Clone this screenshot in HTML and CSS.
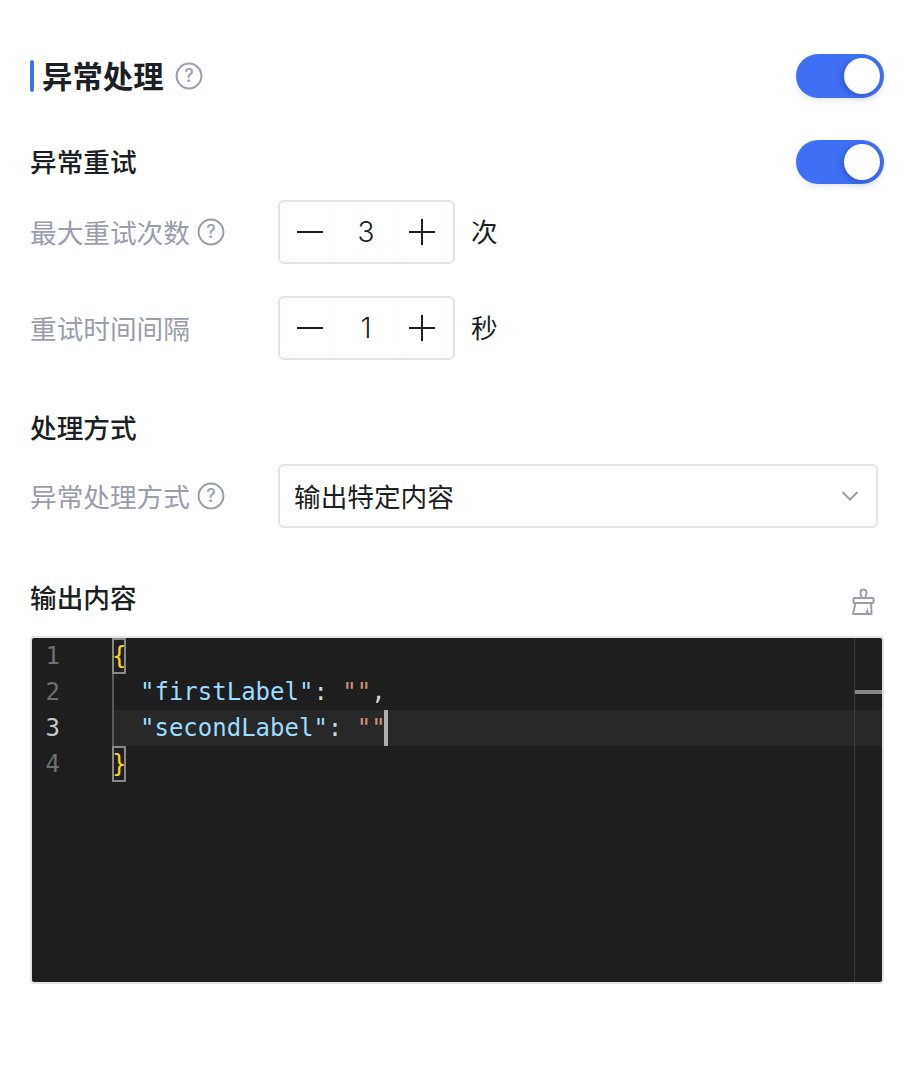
FILE: index.html
```html
<!DOCTYPE html>
<html lang="zh-CN">
<head>
<meta charset="utf-8">
<title>异常处理</title>
<link rel="stylesheet" href="styles.css">
</head>
<body>
<main class="panel">
  <header class="row title-row">
    <div class="title-wrap">
      <span class="title-bar"></span>
      <h1 class="title">异常处理</h1>
      <svg class="help help-title" viewBox="0 0 28 28"><circle cx="14" cy="14" r="12.4" fill="none" stroke="#9a9dab" stroke-width="2"/><text x="14" y="20" text-anchor="middle" class="help-q">?</text></svg>
    </div>
    <div class="toggle"><span class="knob"></span></div>
  </header>

  <div class="row sub-row first-sub">
    <h2 class="sub">异常重试</h2>
    <div class="toggle"><span class="knob"></span></div>
  </div>

  <div class="field">
    <label class="label">最大重试次数<svg class="help" viewBox="0 0 28 28"><circle cx="14" cy="14" r="12.4" fill="none" stroke="#9a9dab" stroke-width="2"/><text x="14" y="20" text-anchor="middle" class="help-q">?</text></svg></label>
    <div class="stepper">
      <span class="step"><svg viewBox="0 0 26 26" class="step-icon"><path d="M0 13H26" stroke="#1c1f23" stroke-width="2"/></svg></span>
      <span class="value">3</span>
      <span class="step"><svg viewBox="0 0 26 26" class="step-icon"><path d="M0 13H26M13 0V26" stroke="#1c1f23" stroke-width="2"/></svg></span>
    </div>
    <span class="unit">次</span>
  </div>

  <div class="field field-next">
    <label class="label">重试时间间隔</label>
    <div class="stepper">
      <span class="step"><svg viewBox="0 0 26 26" class="step-icon"><path d="M0 13H26" stroke="#1c1f23" stroke-width="2"/></svg></span>
      <span class="value">1</span>
      <span class="step"><svg viewBox="0 0 26 26" class="step-icon"><path d="M0 13H26M13 0V26" stroke="#1c1f23" stroke-width="2"/></svg></span>
    </div>
    <span class="unit">秒</span>
  </div>

  <div class="row sub-row second-sub"><h2 class="sub">处理方式</h2></div>

  <div class="field">
    <label class="label">异常处理方式<svg class="help" viewBox="0 0 28 28"><circle cx="14" cy="14" r="12.4" fill="none" stroke="#9a9dab" stroke-width="2"/><text x="14" y="20" text-anchor="middle" class="help-q">?</text></svg></label>
    <div class="select">
      <span class="select-text">输出特定内容</span>
      <svg class="chevron" viewBox="0 0 18 12"><path d="M1.5 2 9 9.500 16.500 2" fill="none" stroke="#9a9dab" stroke-width="2"/></svg>
    </div>
  </div>

  <div class="row sub-row third-sub">
    <h2 class="sub">输出内容</h2>
    <svg class="brush" viewBox="0 0 24 32"><path d="M10.500 15C10.500 12.500 9.500 11.500 9.500 9.500a3 3 0 0 1 6 0C15.500 11.500 14.500 12.500 14.500 15M3.500 15h18a1 1 0 0 1 1 1v3a1 1 0 0 1-1 1h-18a1 1 0 0 1-1-1v-3a1 1 0 0 1 1-1zM4.500 20 2 31h18.500L20 20" fill="none" stroke="#9a9dab" stroke-width="2" stroke-linejoin="round"/><path d="M14.500 31l2-6.500 1.500 6.500z" fill="#9a9dab"/></svg>
  </div>

  <div class="editor">
    <div class="gutter">
      <div class="ln">1</div>
      <div class="ln">2</div>
      <div class="ln ln-active">3</div>
      <div class="ln">4</div>
    </div>
    <div class="code">
      <span class="guide"></span>
      <div class="line"><span class="bracket">{</span></div>
      <div class="line indented"><span class="key">"firstLabel"</span><span class="punct">: </span><span class="str">""</span><span class="punct">,</span></div>
      <div class="line indented line-active"><span class="key">"secondLabel"</span><span class="punct">: </span><span class="str">""</span><span class="cursor"></span></div>
      <div class="line"><span class="bracket">}</span></div>
    </div>
    <div class="ruler"><span class="ruler-mark"></span></div>
  </div>
</main>
</body>
</html>
```
FILE: styles.css
```css
* { box-sizing: border-box; }
html, body { margin: 0; padding: 0; background: #fff; }
body { font-family: "Noto Sans CJK SC", "Inter", sans-serif; color: #1c1f23; }
.panel { width: 914px; height: 1082px; padding: 54px 30px 0; }
.row { display: flex; align-items: center; justify-content: space-between; height: 44px; }
.title-wrap { display: flex; align-items: center; }
.title-bar { width: 4px; height: 32px; border-radius: 2px; background: #4070f6; margin-right: 8px; }
.title { margin: 0; font-size: 30.4px; line-height: 42px; padding-bottom: 2px; font-weight: 700; color: #1c1f23; }
.help { width: 28px; height: 28px; margin-left: 7px; flex: none; }
.help-title { margin-left: 11px; }
.help-q { font-family: "Inter", sans-serif; font-size: 18px; font-weight: 500; fill: #9a9dab; }
.toggle { position: relative; width: 88px; height: 44px; border-radius: 22px; background: #4070f6; box-shadow: 0 3px 6px rgba(30,50,120,.1); }
.knob { position: absolute; top: 4px; right: 4px; width: 36px; height: 36px; border-radius: 50%; background: #fff; box-shadow: -2px 2px 6px rgba(20,30,80,.3); }
.first-sub { margin-top: 42px; margin-bottom: 16px; }
.second-sub { margin-top: 46px; margin-bottom: 14px; }
.third-sub { margin-top: 48px; margin-bottom: 16px; padding-right: 9px; }
.sub { margin: 0; font-size: 26.67px; line-height: 40px; padding-bottom: 3px; font-weight: 500; color: #1c1f23; }
.field { display: flex; align-items: center; height: 64px; }
.field-next { margin-top: 32px; }
.label { display: flex; align-items: center; width: 248px; font-size: 26.67px; line-height: 36px; color: #9a9dab; flex: none; }
.stepper { display: flex; align-items: center; justify-content: space-between; width: 177px; height: 64px; border: 2px solid #e3e3e8; border-radius: 6px; padding: 0 7px 0 6px; }
.step { display: flex; align-items: center; justify-content: center; width: 48px; height: 54px; border-radius: 8px; box-shadow: 0 1px 2px rgba(0,0,0,.04); }
.step-icon { width: 26px; height: 26px; }
.value { font-family: "Inter", sans-serif; font-size: 28px; font-weight: 300; color: #1c1f23; }
.unit { margin-left: 16px; font-size: 26.67px; line-height: 36px; padding-bottom: 2px; color: #1c1f23; }
.select { display: flex; align-items: center; justify-content: space-between; width: 600px; height: 64px; border: 2px solid #e3e3e8; border-radius: 6px; padding: 0 17px 0 14px; font-size: 26.67px; }
.select-text { padding-bottom: 2px; }
.chevron { width: 18px; height: 12px; }
.brush { width: 24px; height: 32px; margin-top: 2px; }
.editor { position: relative; display: flex; width: 854px; height: 348px; border: 2px solid #e3e3e8; border-radius: 4px; background: #1e1e1e; font-family: "DejaVu Sans Mono", monospace; font-size: 24px; line-height: 36px; overflow: hidden; }
.gutter { width: 80px; flex: none; padding-right: 52px; }
.ln { height: 36px; color: #6e7072; text-align: right; }
.ln-active { color: #c6c6c6; }
.code { flex: 1; position: relative; z-index: 1; }
.guide { position: absolute; left: 0; top: 36px; width: 2px; height: 72px; background: #5a5a5a; z-index: 2; }
.line { height: 36px; white-space: pre; }
.indented { padding-left: 28px; }
.line-active { background: #282828; }
.bracket { display: inline-block; height: 36px; color: #ffd700; outline: 2px solid #888; outline-offset: -2px; }
.key { color: #9cdcfe; }
.punct { color: #d4d4d4; }
.str { color: #ce9178; }
.cursor { display: inline-block; width: 4px; height: 36px; margin-left: -2px; background: #aeafad; vertical-align: top; }
.ruler { position: absolute; top: 0; right: 0; bottom: 0; width: 28px; border-left: 1px solid #3a3a3a; z-index: 2; }
.ruler-mark { display: block; height: 4px; margin-top: 52px; background: #888; }
```
